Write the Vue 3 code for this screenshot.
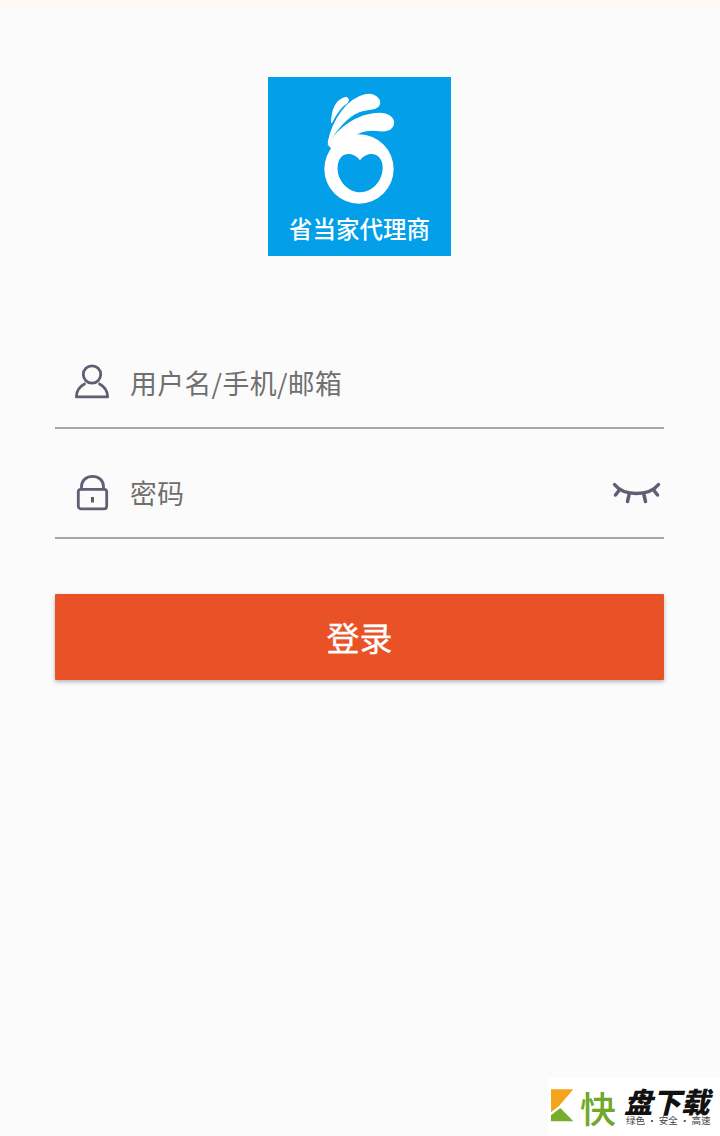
<template>
  <div class="page">
    <div class="logo">
      <svg class="logo-mark" viewBox="-126 -24 549 537" aria-hidden="true">
        <g class="petals">
          <path d="M65 112C66 80 76 50 100 40C112 35 118 42 112 52C95 62 78 85 65 112Z" />
          <path d="M55 172C68 105 112 42 165 30C190 24 212 40 208 58C204 72 180 72 160 76C120 84 85 125 55 172Z" />
          <path d="M55 178C85 130 140 88 205 85C235 84 252 100 250 115C248 135 225 140 200 136C170 132 145 140 125 157L70 195Z" />
        </g>
        <path
          fill="#fff"
          fill-rule="evenodd"
          d="M43 252a104 104 0 1 0 208 0a104 104 0 1 0-208 0ZM150 226C138 208 112 200 96 214C80 228 78 262 92 285C106 310 130 322 150 322C172 322 196 308 208 286C222 262 222 228 204 214C188 200 162 208 150 226Z"
        />
      </svg>
      <span class="logo-text">省当家代理商</span>
    </div>

    <form class="form" @submit.prevent>
      <label class="field">
        <svg class="icon" viewBox="0 0 38 38" aria-hidden="true">
          <circle cx="19" cy="10.500" r="8.700" />
          <path d="M11.500 20C6.500 22.500 3.500 27.500 3.300 32.800H34.700C34.500 27.500 31.500 22.500 26.500 20" />
        </svg>
        <input class="input" type="text" placeholder="用户名/手机/邮箱" />
      </label>

      <label class="field">
        <svg class="icon" viewBox="0 0 38 38" aria-hidden="true">
          <rect x="5.300" y="15.300" width="28.400" height="19.500" rx="2.500" />
          <path d="M8.500 15V12.500C8.500 6.500 13.500 2.300 19.500 2.300S30.500 6.500 30.500 12.500V15" />
          <path class="keyhole" d="M19.500 23V28.500" />
        </svg>
        <input class="input" type="password" placeholder="密码" />
        <svg class="eye" viewBox="612 480 50 26" aria-hidden="true">
          <path d="M614.500 484.500C624 496.500 649 496.500 658.500 484.500" />
          <path d="M619 490.500L615.500 495M629 495L627.500 501.500M644 495L645.500 501.500M654 490.500L657.500 495" />
        </svg>
      </label>

      <button class="submit" type="submit">登录</button>
    </form>

    <div class="watermark">
      <svg class="wm-logo" viewBox="18 27 72 102" aria-hidden="true">
        <path fill="#f5a51b" d="M18 28H85L42 78L18 97Z" />
        <path fill="#76ad2a" d="M18 124V106L46 84L85 124Z" />
      </svg>
      <span class="wm-fast">快</span>
      <div class="wm-side">
        <span class="wm-name">盘下载</span>
        <span class="wm-slogan">绿色 · 安全 · 高速</span>
      </div>
    </div>
  </div>
</template>

<script setup>
</script>

<style>
html,
body {
  margin: 0;
  background: #fbfbfb;
}
</style>

<style scoped>
.page {
  position: relative;
  height: 1136px;
  overflow: hidden;
  box-sizing: border-box;
  padding-top: 77px;
  background: linear-gradient(#fdf8f5 0, #fdf8f5 5px, #fbfbfb 8px);
  font-family: "Noto Sans CJK SC", "Noto Sans", sans-serif;
}

.logo {
  position: relative;
  width: 183px;
  height: 179px;
  margin-left: 268px;
  background: #03a0e9;
}

.logo-mark {
  display: block;
  width: 183px;
  height: 179px;
  filter: blur(0.4px);
}

.petals {
  fill: #fff;
  stroke: #fff;
  stroke-width: 4;
  stroke-linejoin: round;
}

.logo-text {
  position: absolute;
  left: 0;
  right: 0;
  top: 134px;
  text-align: center;
  color: #fff;
  font-size: 23.500px;
  font-weight: 500;
  line-height: 34px;
  white-space: nowrap;
}

.form {
  display: flex;
  flex-direction: column;
  padding: 63px 56px 0 55px;
}

.field {
  display: flex;
  align-items: flex-end;
  height: 110px;
  box-sizing: border-box;
  padding: 0 2px 25px 18px;
  border-bottom: 2px solid #a6a6a6;
}

.icon {
  flex: none;
  width: 38px;
  height: 38px;
  fill: none;
  stroke: #5f5f74;
  stroke-width: 2.800;
  stroke-linecap: round;
  stroke-linejoin: round;
}

.keyhole {
  stroke-width: 3;
  stroke-linecap: butt;
}

.input {
  flex: 1;
  min-width: 0;
  height: 38px;
  margin: 0 0 1px 19px;
  padding: 0;
  border: 0;
  outline: 0;
  background: transparent;
  font-family: inherit;
  font-size: 26.800px;
  letter-spacing: 0.400px;
  color: #333;
}

.input::placeholder {
  color: #6f6f6f;
  opacity: 1;
}

.eye {
  flex: none;
  width: 50px;
  height: 26px;
  margin-bottom: 6px;
  fill: none;
  stroke: #5f5f74;
  stroke-width: 3.500;
  stroke-linecap: round;
}

.submit {
  height: 86px;
  margin-top: 55px;
  padding: 0;
  border: 0;
  border-radius: 1px;
  background: #e95227;
  box-shadow: 0 2px 4px rgba(0, 0, 0, 0.28);
  color: #fff;
  font-family: inherit;
  font-size: 33px;
  -webkit-text-stroke: 0.300px #fff;
  line-height: 86px;
}

.watermark {
  position: absolute;
  right: 0;
  bottom: 0;
  display: flex;
  width: 172px;
  height: 58px;
  box-sizing: border-box;
  padding: 11px 0 0 3px;
  background: #fff;
}

.wm-logo {
  flex: none;
  width: 24px;
  height: 34px;
}

.wm-fast {
  width: 36px;
  margin: 1px 0 0 5px;
  color: #6fa82a;
  font-size: 36px;
  font-weight: 500;
  line-height: 34px;
}

.wm-side {
  display: flex;
  flex-direction: column;
  margin-left: 8px;
}

.wm-name {
  color: #111;
  font-size: 28.500px;
  font-weight: 900;
  font-style: italic;
  line-height: 23px;
  white-space: nowrap;
}

.wm-slogan {
  margin: 2px 0 0 2px;
  color: #444;
  font-size: 9.500px;
  line-height: 12px;
  white-space: pre;
}
</style>
